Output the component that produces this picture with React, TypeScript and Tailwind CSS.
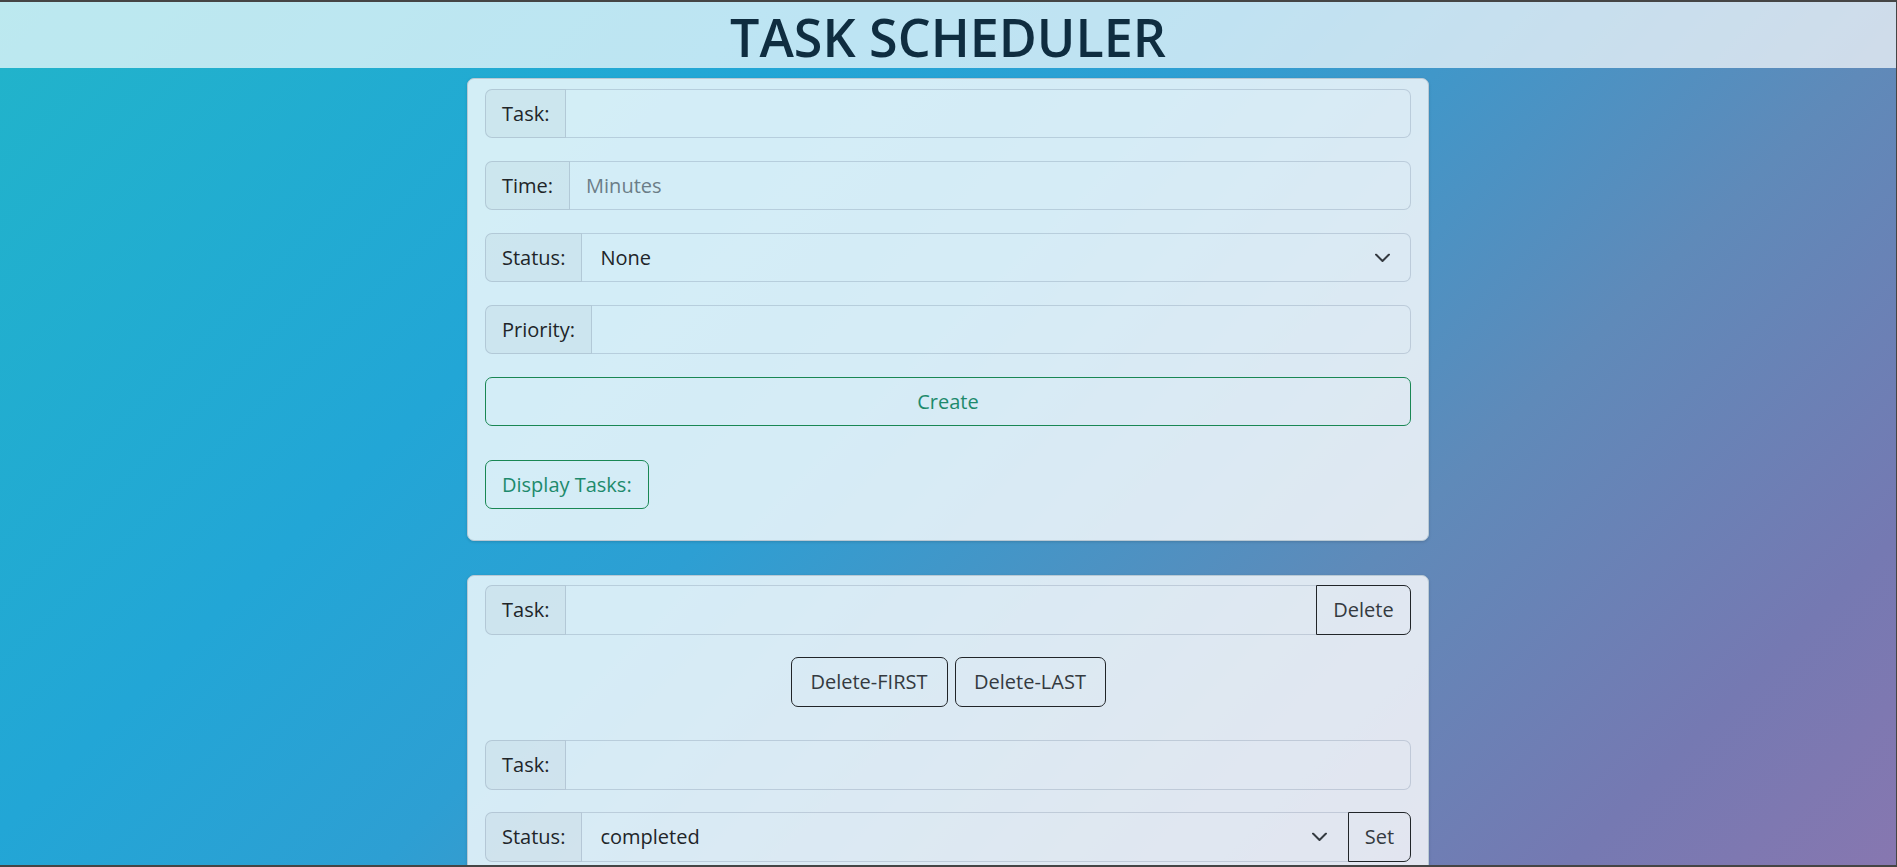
import React, { useState } from 'react';

const Chevron: React.FC = () => (
  <svg width="15" height="9" viewBox="0 0 15 9" fill="none" className="pointer-events-none absolute right-[21px] top-1/2 -translate-y-1/2">
    <polyline points="1,1 7.5,7.5 14,1" stroke="#343a40" strokeWidth="2" strokeLinecap="round" strokeLinejoin="round" />
  </svg>
);

const Label: React.FC<{ text: string }> = ({ text }) => (
  <span className="flex items-center rounded-l-[7px] border border-slate-500/25 bg-black/[0.03] px-4 text-[#212529]">
    {text}
  </span>
);

const App: React.FC = () => {
  const [task, setTask] = useState('');
  const [time, setTime] = useState('');
  const [status, setStatus] = useState('None');
  const [priority, setPriority] = useState('');
  const [delTask, setDelTask] = useState('');
  const [setTaskName, setSetTaskName] = useState('');
  const [newStatus, setNewStatus] = useState('completed');

  return (
    <div className="h-screen overflow-hidden border-t-2 border-r border-b-2 border-[#454545] bg-[linear-gradient(135deg,#21b4ca_0%,#22a6d6_30%,#2d9fd3_45%,#5f8ab9_70%,#7579b2_88%,#8777b0_100%)] font-['Open_Sans',sans-serif] text-[20px] text-[#212529]">
      {/* header */}
      <header className="flex h-[66px] items-center justify-center bg-white/70">
        <h1 className="pt-[3px] text-[52px] font-semibold leading-none text-[#0f2d40]">TASK SCHEDULER</h1>
      </header>

      {/* create form */}
      <div className="mx-auto mt-[10px] w-[962px] rounded-[7px] border border-[#b9c9d4] bg-white/80 px-[17px] pt-[10px] pb-[31px] shadow-[0_1px_3px_rgba(0,0,0,0.15)]">
        <div className="flex flex-col gap-[23px]">
          <div className="flex h-[49px]">
            <Label text="Task:" />
            <input
              value={task}
              onChange={e => setTask(e.target.value)}
              className="min-w-0 flex-1 rounded-r-[7px] border border-l-0 border-slate-500/25 bg-transparent px-4 outline-none"
            />
          </div>
          <div className="flex h-[49px]">
            <Label text="Time:" />
            <input
              value={time}
              onChange={e => setTime(e.target.value)}
              placeholder="Minutes"
              className="min-w-0 flex-1 rounded-r-[7px] border border-l-0 border-slate-500/25 bg-transparent px-4 outline-none placeholder:text-[#6b7d87]"
            />
          </div>
          <div className="flex h-[49px]">
            <Label text="Status:" />
            <div className="relative min-w-0 flex-1">
              <select
                value={status}
                onChange={e => setStatus(e.target.value)}
                className="h-full w-full appearance-none rounded-r-[7px] border border-l-0 border-slate-500/25 bg-transparent pl-[18px] outline-none"
              >
                <option>None</option>
                <option>pending</option>
                <option>completed</option>
              </select>
              <Chevron />
            </div>
          </div>
          <div className="flex h-[49px]">
            <Label text="Priority:" />
            <input
              value={priority}
              onChange={e => setPriority(e.target.value)}
              className="min-w-0 flex-1 rounded-r-[7px] border border-l-0 border-slate-500/25 bg-transparent px-4 outline-none"
            />
          </div>
          <button className="h-[49px] w-full rounded-[7px] border border-[#198754] text-[#1d8a6c]">Create</button>
        </div>
        <button className="mt-[34px] h-[49px] rounded-[7px] border border-[#198754] px-4 text-[#1d8a6c]">Display Tasks:</button>
      </div>

      {/* edit form */}
      <div className="mx-auto mt-[34px] w-[962px] rounded-[7px] border border-[#b9c9d4] bg-white/80 px-[17px] pt-[9px] pb-[31px] shadow-[0_1px_3px_rgba(0,0,0,0.15)]">
        <div className="flex h-[50px]">
          <Label text="Task:" />
          <input
            value={delTask}
            onChange={e => setDelTask(e.target.value)}
            className="min-w-0 flex-1 border border-x-0 border-slate-500/25 bg-transparent px-4 outline-none"
          />
          <button className="w-[95px] rounded-r-[7px] border border-[#212529] text-[#343a40]">Delete</button>
        </div>

        <div className="mt-[22px] flex justify-center gap-[7px]">
          <button className="h-[50px] w-[157px] rounded-[7px] border border-[#212529] text-[#343a40]">Delete-FIRST</button>
          <button className="h-[50px] w-[151px] rounded-[7px] border border-[#212529] text-[#343a40]">Delete-LAST</button>
        </div>

        <div className="mt-[33px] flex h-[50px]">
          <Label text="Task:" />
          <input
            value={setTaskName}
            onChange={e => setSetTaskName(e.target.value)}
            className="min-w-0 flex-1 rounded-r-[7px] border border-l-0 border-slate-500/25 bg-transparent px-4 outline-none"
          />
        </div>

        <div className="mt-[22px] flex h-[50px]">
          <Label text="Status:" />
          <div className="relative min-w-0 flex-1">
            <select
              value={newStatus}
              onChange={e => setNewStatus(e.target.value)}
              className="h-full w-full appearance-none border border-x-0 border-slate-500/25 bg-transparent pl-[18px] outline-none"
            >
              <option>completed</option>
              <option>pending</option>
              <option>None</option>
            </select>
            <Chevron />
          </div>
          <button className="w-[63px] rounded-r-[7px] border border-[#212529] text-[#343a40]">Set</button>
        </div>
      </div>
    </div>
  );
};

export default App;
